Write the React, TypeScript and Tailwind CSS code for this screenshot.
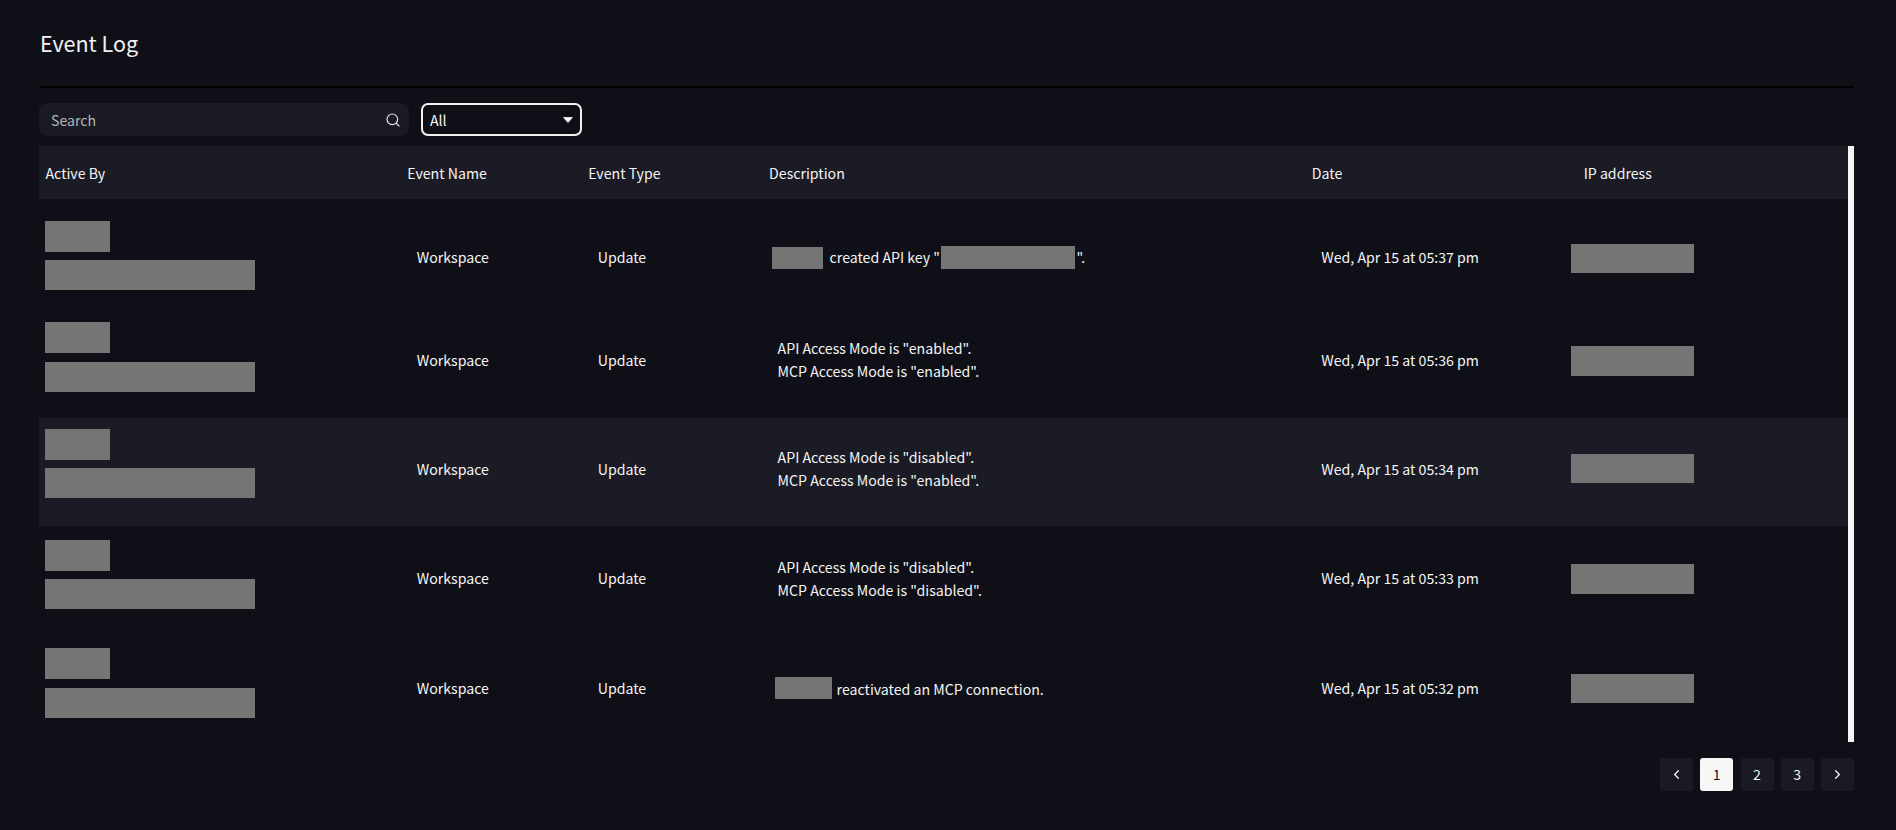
import { ChevronLeft, ChevronRight, Search } from "lucide-react";

const font = "font-['Noto_Sans_CJK_JP','Noto_Sans',sans-serif]";

function Redact({ className }: { className: string }) {
  return <div className={`bg-[#757575] ${className}`} />;
}

type Row = {
  h: string;
  pb: string;
  bg: string;
  date: string;
  stack: string;
  ip: string;
  desc: React.ReactNode;
};

const textBlock = (a: string, b: string, extra: string) => (
  <div className={`ml-[15px] flex flex-col gap-[3px] leading-[20px] ${extra}`}>
    <span>{a}</span>
    <span>{b}</span>
  </div>
);

const rows: Row[] = [
  {
    h: "h-[116px]",
    pb: "pb-0",
    bg: "",
    date: "Wed, Apr 15 at 05:37 pm",
    stack: "mb-[3px]",
    ip: "mt-[3px]",
    desc: (
      <div className="ml-[9px] flex items-center pt-[1px]">
        <Redact className="h-[22px] w-[51px]" />
        <span className="ml-[7px] whitespace-pre pt-[1px]">created API key "</span>
        <Redact className="ml-[1.5px] h-[23px] w-[134px]" />
        <span className="ml-[1px] pt-[1px]">".</span>
      </div>
    ),
  },
  {
    h: "h-[103px]",
    pb: "pb-[13px]",
    bg: "",
    date: "Wed, Apr 15 at 05:36 pm",
    stack: "mb-[6px]",
    ip: "mt-[2px]",
    desc: textBlock('API Access Mode is "enabled".', 'MCP Access Mode is "enabled".', "mb-[1px]"),
  },
  {
    h: "h-[108px]",
    pb: "pb-[7px]",
    bg: "bg-[#1a1b24]",
    date: "Wed, Apr 15 at 05:34 pm",
    stack: "mb-[10px]",
    ip: "mt-0",
    desc: textBlock('API Access Mode is "disabled".', 'MCP Access Mode is "enabled".', "mt-0"),
  },
  {
    h: "h-[104px]",
    pb: "pb-0",
    bg: "",
    date: "Wed, Apr 15 at 05:33 pm",
    stack: "mb-[7px]",
    ip: "mt-[2px]",
    desc: textBlock('API Access Mode is "disabled".', 'MCP Access Mode is "disabled".', "mt-0"),
  },
  {
    h: "h-[116px]",
    pb: "pb-0",
    bg: "",
    date: "Wed, Apr 15 at 05:32 pm",
    stack: "mb-[10px]",
    ip: "mt-[1px]",
    desc: (
      <div className="ml-[12px] flex items-center">
        <Redact className="h-[22px] w-[57px]" />
        <span className="ml-[5px] pt-[3px]">reactivated an MCP connection.</span>
      </div>
    ),
  },
];

const cols = "grid grid-cols-[2fr_1fr_1fr_3fr_1.5fr_1.5fr]";

export default function App() {
  return (
    <div className={`h-[830px] w-[1896px] overflow-hidden bg-[#0f1017] pl-[39px] pr-[42px] text-[14.15px] text-[#f5f5f5] ${font}`}>
      <div className="flex h-[86px] items-center pl-[1px]">
        <h1 className="text-[21.5px] font-normal leading-none text-[#f2f2f2]">Event Log</h1>
      </div>
      <div className="h-[2px] bg-[#020203]" />
      <div className="mt-[15px] flex gap-[12px]">
        <div className="flex h-[33px] w-[370px] items-center justify-between rounded-[8px] bg-[#191a23] pl-[12px] pr-[8px]">
          <span className="pt-[2px] text-[#b4b5b9]">Search</span>
          <Search size={16} strokeWidth={1.75} className="text-[#e6e6e6]" />
        </div>
        <div className="flex h-[33px] w-[161px] items-center justify-between rounded-[7px] border-2 border-[#f2f2f2] bg-[#0f1017] pl-[7px] pr-[7px]">
          <span className="pt-[2px]">All</span>
          <svg width="10" height="6" viewBox="0 0 10 6" className="text-white">
            <path d="M0.6 0.6h8.8L5 5.4z" fill="currentColor" stroke="currentColor" strokeWidth="0.8" strokeLinejoin="round" />
          </svg>
        </div>
      </div>
      <div className="mt-[10px] flex h-[596px]">
        <div className="min-w-0 flex-1 overflow-hidden">
          <div className={`${cols} h-[53px] items-center bg-[#1a1b24] pt-[2px]`}>
            <div className="pl-[6.5px]">Active By</div>
            <div className="pl-[6.5px]">Event Name</div>
            <div className="pl-[6.5px]">Event Type</div>
            <div className="pl-[6.5px]">Description</div>
            <div className="pl-[6.5px]">Date</div>
            <div className="pl-[7px]">IP address</div>
          </div>
          {rows.map((r) => (
            <div key={r.date} className={`${cols} ${r.h} ${r.pb} ${r.bg} items-center`}>
              <div className={`flex flex-col gap-[8.5px] pl-[6px] ${r.stack}`}>
                <Redact className="h-[31px] w-[65px]" />
                <Redact className="h-[30px] w-[210px]" />
              </div>
              <div className="pl-[16px] pt-[2px]">Workspace</div>
              <div className="pl-[16px] pt-[2px]">Update</div>
              <div className="pl-0">{r.desc}</div>
              <div className="pl-[16px] pt-[2px]">{r.date}</div>
              <div className={`-ml-[6px] ${r.ip}`}>
                <Redact className="h-[29.5px] w-[123px]" />
              </div>
            </div>
          ))}
        </div>
        <div className="h-full w-[6px] bg-[#f5f5f5]" />
      </div>
      <div className="mt-[16px] flex justify-end gap-[7.25px]">
        <button className="flex h-[33px] w-[33px] items-center justify-center rounded-[3px] bg-[#191a23] text-[#f2f2f2]">
          <ChevronLeft size={15} />
        </button>
        <button className="flex h-[33px] w-[33px] items-center justify-center rounded-[3px] bg-[#f7f7f7] text-[#15151c]">1</button>
        <button className="flex h-[33px] w-[33px] items-center justify-center rounded-[3px] bg-[#191a23]">2</button>
        <button className="flex h-[33px] w-[33px] items-center justify-center rounded-[3px] bg-[#191a23]">3</button>
        <button className="flex h-[33px] w-[33px] items-center justify-center rounded-[3px] bg-[#191a23] text-[#f2f2f2]">
          <ChevronRight size={15} />
        </button>
      </div>
    </div>
  );
}
